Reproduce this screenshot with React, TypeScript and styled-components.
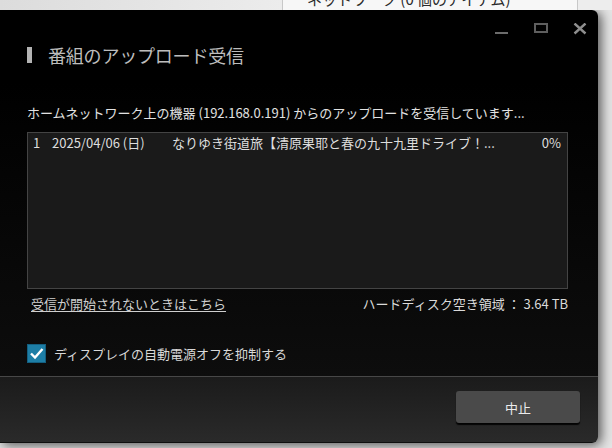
import React from "react";
import styled, { createGlobalStyle } from "styled-components";

const GlobalStyle = createGlobalStyle`
  html, body {
    margin: 0;
    padding: 0;
    background: #e6e6e6;
  }
  * {
    box-sizing: border-box;
  }
`;

const FONT = `"Noto Sans CJK JP", "Noto Sans", sans-serif`;

type Upload = {
  index: number;
  date: string;
  title: string;
  progress: number;
};

const uploads: Upload[] = [
  {
    index: 1,
    date: "2025/04/06 (日)",
    title: "なりゆき街道旅【清原果耶と春の九十九里ドライブ！...",
    progress: 0,
  },
];

export default function App() {
  return (
    <>
      <GlobalStyle />
      <S.Screen>
        <S.BehindStrip>
          <S.BehindPane tone="side" width={283} />
          <S.BehindPane tone="main" width={295}>
            <S.BehindText>ネットワーク (0 個のアイテム)</S.BehindText>
          </S.BehindPane>
          <S.BehindPane tone="edge" width={34} />
        </S.BehindStrip>

        <S.Dialog>
          <S.Body>
            <S.Controls>
              <S.ControlIcon viewBox="0 0 14 12">
                <rect x="0" y="9" width="13" height="2" fill="#6c6c6c" />
              </S.ControlIcon>
              <S.ControlIcon viewBox="0 0 14 12">
                <rect
                  x="1"
                  y="1"
                  width="12"
                  height="8"
                  fill="none"
                  stroke="#5e5e5e"
                  strokeWidth="2"
                />
              </S.ControlIcon>
              <S.ControlIcon viewBox="0 0 14 12">
                <path
                  d="M1.5 0.5 L12.5 10.5 M12.5 0.5 L1.5 10.5"
                  stroke="#8e8e8e"
                  strokeWidth="2.4"
                />
              </S.ControlIcon>
            </S.Controls>

            <S.TitleRow>
              <S.TitleBar />
              <S.Title>番組のアップロード受信</S.Title>
            </S.TitleRow>

            <S.Message>
              ホームネットワーク上の機器 (192.168.0.191) からのアップロードを受信しています...
            </S.Message>

            <S.ListBox>
              {uploads.map((u) => (
                <S.ListRow key={u.index}>
                  <S.IndexCell>{u.index}</S.IndexCell>
                  <S.DateCell>{u.date}</S.DateCell>
                  <S.TitleCell>{u.title}</S.TitleCell>
                  <S.ProgressCell>{u.progress}%</S.ProgressCell>
                </S.ListRow>
              ))}
            </S.ListBox>

            <S.InfoRow>
              <S.HelpLink href="#">受信が開始されないときはこちら</S.HelpLink>
              <S.DiskSpace>ハードディスク空き領域 ： 3.64 TB</S.DiskSpace>
            </S.InfoRow>

            <S.CheckRow>
              <S.CheckBox>
                <svg width="15" height="15" viewBox="0 0 15 15">
                  <path
                    d="M2 7.5 L6 11.5 L13.5 3"
                    fill="none"
                    stroke="#ffffff"
                    strokeWidth="2.4"
                  />
                </svg>
              </S.CheckBox>
              <S.CheckLabel>ディスプレイの自動電源オフを抑制する</S.CheckLabel>
            </S.CheckRow>
          </S.Body>

          <S.Footer>
            <S.StopButton>中止</S.StopButton>
          </S.Footer>
        </S.Dialog>
      </S.Screen>
    </>
  );
}

const S = {
  Screen: styled.div`
    width: 612px;
    height: 448px;
    overflow: hidden;
    background: #e4e4e4;
    font-family: ${FONT};
  `,
  BehindStrip: styled.div`
    display: flex;
    height: 10px;
    overflow: hidden;
  `,
  BehindPane: styled.div<{ tone: "side" | "main" | "edge"; width: number }>`
    flex: 0 0 ${({ width }) => width}px;
    height: 10px;
    padding-left: 24px;
    background: ${({ tone }) =>
      tone === "side"
        ? "linear-gradient(90deg, #dcdcdc, #ececec)"
        : tone === "main"
        ? "#f7f7f7"
        : "#ededed"};
    border-right: ${({ tone }) =>
      tone === "edge" ? "none" : "1px solid #c8c8c8"};
  `,
  BehindText: styled.div`
    margin-top: -9px;
    font-size: 15px;
    line-height: 15px;
    color: #2a2a2a;
    white-space: nowrap;
  `,
  Dialog: styled.div`
    width: 598px;
    height: 433px;
    display: flex;
    flex-direction: column;
    border-radius: 0 6px 6px 0;
    overflow: hidden;
    box-shadow: 3px 2px 12px rgba(0, 0, 0, 0.65);
  `,
  Body: styled.div`
    flex: 1;
    display: flex;
    flex-direction: column;
    padding: 13px 30px 0 27px;
    background: linear-gradient(180deg, #000 0%, #000 20%, #0d0d0d 100%);
  `,
  Controls: styled.div`
    display: flex;
    justify-content: flex-end;
    gap: 25px;
    margin-right: -19px;
  `,
  ControlIcon: styled.svg`
    width: 14px;
    height: 12px;
    display: block;
  `,
  TitleRow: styled.div`
    display: flex;
    align-items: center;
    gap: 16px;
    height: 24px;
    margin-top: 8px;
  `,
  TitleBar: styled.div`
    width: 5px;
    height: 16px;
    background: #b4b4b4;
  `,
  Title: styled.div`
    font-size: 18px;
    line-height: 24px;
    color: #bdbdbd;
    letter-spacing: -0.2px;
  `,
  Message: styled.div`
    margin-top: 37px;
    font-size: 13px;
    line-height: 18px;
    color: #e2e2e2;
    white-space: nowrap;
  `,
  ListBox: styled.div`
    margin-top: 10px;
    height: 157px;
    border: 1px solid #444;
    background: #1a1a1a;
    padding-top: 1px;
  `,
  ListRow: styled.div`
    display: flex;
    align-items: center;
    height: 18px;
    padding: 0 6px 0 5px;
    font-size: 13px;
    line-height: 18px;
    color: #dedede;
    white-space: nowrap;
  `,
  IndexCell: styled.span`
    flex: 0 0 19px;
  `,
  DateCell: styled.span`
    flex: 0 0 120px;
  `,
  TitleCell: styled.span`
    flex: 1;
    overflow: hidden;
  `,
  ProgressCell: styled.span`
    flex: 0 0 auto;
  `,
  InfoRow: styled.div`
    display: flex;
    justify-content: space-between;
    align-items: center;
    margin-top: 6px;
    padding-left: 4px;
    height: 18px;
    font-size: 13px;
    line-height: 18px;
  `,
  HelpLink: styled.a`
    color: #cfcfcf;
    text-decoration: underline;
    text-underline-offset: 2px;
  `,
  DiskSpace: styled.span`
    color: #dadada;
    white-space: pre;
  `,
  CheckRow: styled.div`
    display: flex;
    align-items: center;
    gap: 8px;
    margin-top: 31px;
  `,
  CheckBox: styled.div`
    width: 19px;
    height: 19px;
    display: flex;
    align-items: center;
    justify-content: center;
    background: #1d7ea6;
    border: 1px solid #145f80;
  `,
  CheckLabel: styled.span`
    font-size: 13px;
    line-height: 18px;
    color: #d8d8d8;
  `,
  Footer: styled.div`
    flex: 0 0 67px;
    display: flex;
    justify-content: flex-end;
    align-items: flex-start;
    padding: 14px 18px 0 0;
    border-top: 1px solid #474747;
    border-bottom: 1px solid #101010;
    background: linear-gradient(180deg, #1b1b1b, #2a2a2a);
  `,
  StopButton: styled.button`
    width: 124px;
    height: 32px;
    border: none;
    border-radius: 3px;
    background: #4a4a4a;
    box-shadow: 0 2px 1px rgba(0, 0, 0, 0.9);
    color: #ececec;
    font-family: ${FONT};
    font-size: 13px;
    cursor: pointer;
  `,
};
